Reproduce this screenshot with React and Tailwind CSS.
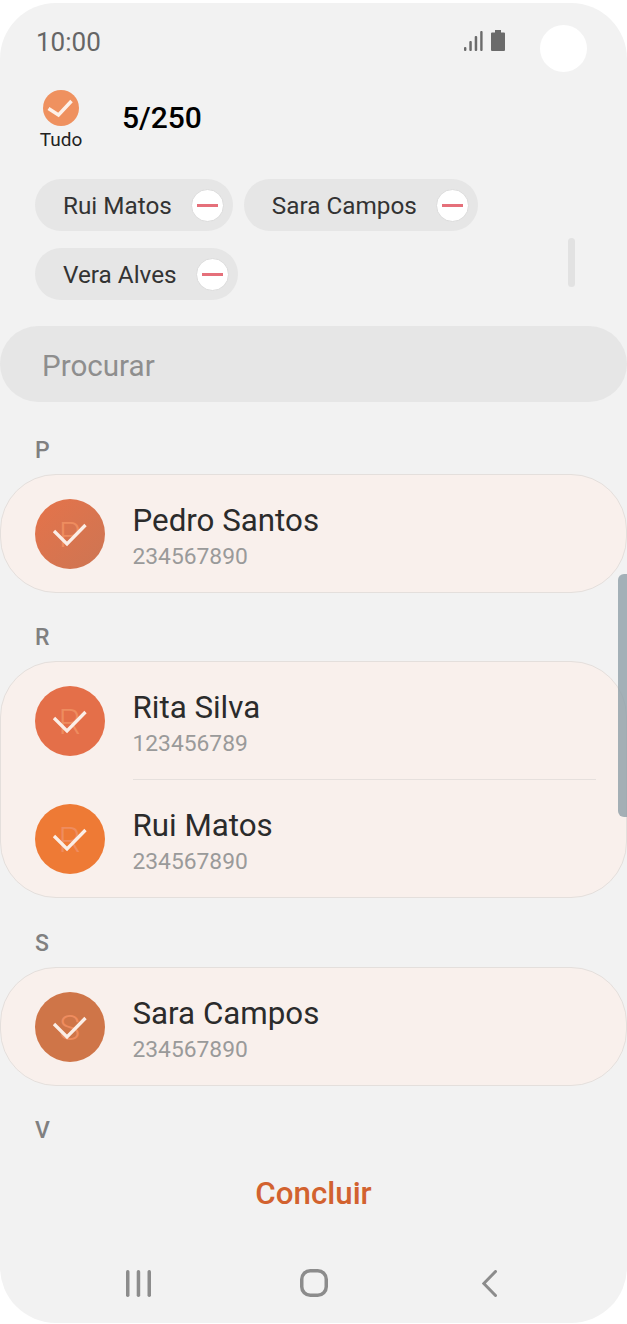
const Chip = ({ name }) => (
  <div className="flex items-center h-[52px] rounded-full bg-[#e6e6e6] pl-[28px] pr-[9px]">
    <span className="text-[24.3px] leading-none pt-[2px] text-[#333]">{name}</span>
    <span className="ml-[19px] flex items-center justify-center w-[33px] h-[33px] rounded-full bg-white border border-[#dcdcdc]">
      <span className="block w-[21px] h-[3px] bg-[#e5707a]" />
    </span>
  </div>
);

const Contact = ({ letter, name, phone, color }) => (
  <div className="flex items-center h-[117px] pl-[33.5px]">
    <div className={`relative flex items-center justify-center w-[70px] h-[70px] pt-[4px] rounded-full ${color}`}>
      <span className="text-[35px] leading-none font-light text-[#ee8c5f]">{letter}</span>
      <svg viewBox="0 0 70 70" className="absolute inset-0 w-[70px] h-[70px]" fill="none" stroke="#fbeee7" strokeWidth="3.300">
        <path d="M19 32 L32 45 L50.500 26" />
      </svg>
    </div>
    <div className="ml-[28px] flex flex-col pt-[5px]">
      <span className="text-[31.3px] leading-[36px] text-[#2b2b2b]">{name}</span>
      <span className="text-[22.8px] leading-[26px] mt-[5px] text-[#9a9a9a]">{phone}</span>
    </div>
  </div>
);

const Section = ({ letter }) => (
  <div className="pl-[35px] h-[24px] text-[23px] leading-[24px] font-medium text-[#808080]">{letter}</div>
);

export default function App() {
  return (
    <div className="w-[627px] h-[1324px] bg-white pt-[3px]" style={{ fontFamily: 'Roboto, sans-serif' }}>
      <div className="relative w-[627px] h-[1320px] rounded-[56px] bg-[#f2f2f2] overflow-hidden">
        {/* status bar */}
        <div className="flex items-center h-[78px] pl-[36px]">
          <span className="text-[26px] leading-none text-[#666]">10:00</span>
          <div className="flex items-end gap-[8px] ml-[363px] -mt-[4px]">
            <svg viewBox="0 0 19 20" className="w-[19px] h-[20px]" fill="#6b6b6b">
              <rect x="0" y="16" width="2.400" height="4" rx="1" />
              <rect x="5.300" y="10" width="2.500" height="10" rx="1" />
              <rect x="10.700" y="5" width="2.500" height="15" rx="1" />
              <rect x="16.200" y="0" width="2.400" height="20" rx="1" />
            </svg>
            <svg viewBox="0 0 14 21" className="w-[14px] h-[21px]" fill="#6b6b6b">
              <path d="M4 0 H10 V2.500 H13 A1 1 0 0 1 14 3.500 V20 A1 1 0 0 1 13 21 H1 A1 1 0 0 1 0 20 V3.500 A1 1 0 0 1 1 2.500 H4 Z" />
            </svg>
          </div>
        </div>
        <div className="absolute left-[540px] top-[22px] w-[47px] h-[47px] rounded-full bg-white" />

        {/* select all */}
        <div className="flex items-start pl-[40px] mt-[9px]">
          <div className="flex flex-col items-center w-[42px]">
            <svg viewBox="0 0 36 36" className="w-[36px] h-[36px]">
              <circle cx="18" cy="18" r="18" fill="#ef915f" />
              <path d="M5.500 18.500 L15.500 25 L28.500 11" fill="none" stroke="#fdf1e9" strokeWidth="3.500" />
            </svg>
            <span className="text-[19px] leading-[22px] mt-[3px] text-[#222]">Tudo</span>
          </div>
          <span className="ml-[40px] mt-[12px] text-[30px] leading-[32px] font-medium text-black">5/250</span>
        </div>

        {/* selected chips */}
        <div className="flex flex-wrap gap-x-[11px] gap-y-[17px] w-[520px] ml-[35px] mt-[28px]">
          <Chip name="Rui Matos" />
          <Chip name="Sara Campos" />
          <Chip name="Vera Alves" />
        </div>
        <div className="absolute left-[568px] top-[235px] w-[7px] h-[49px] rounded-full bg-[#e2e2e2]" />

        {/* search */}
        <div className="flex items-center h-[76px] mt-[26px] pl-[42px] pt-[5px] rounded-full bg-[#e6e6e6]">
          <span className="text-[29.6px] leading-none text-[#8e8e8e]">Procurar</span>
        </div>

        {/* contacts */}
        <div className="mt-[37px]">
          <Section letter="P" />
          <div className="mt-[11px] rounded-[56px] border border-[#e4dfdc] bg-[#f9f0ec]">
            <Contact letter="P" name="Pedro Santos" phone="234567890" color="bg-gradient-to-br from-[#e5734a] to-[#cd7553]" />
          </div>
          <div className="mt-[33px]"><Section letter="R" /></div>
          <div className="mt-[11px] rounded-[56px] border border-[#e4dfdc] bg-[#f9f0ec]">
            <Contact letter="R" name="Rita Silva" phone="123456789" color="bg-[#e46f49]" />
            <div className="h-px ml-[132px] mr-[30px] bg-[#e6e0dd]" />
            <Contact letter="R" name="Rui Matos" phone="234567890" color="bg-[#ee7a35]" />
          </div>
          <div className="mt-[34px]"><Section letter="S" /></div>
          <div className="mt-[11px] rounded-[56px] border border-[#e4dfdc] bg-[#f9f0ec]">
            <Contact letter="S" name="Sara Campos" phone="234567890" color="bg-[#cf7548]" />
          </div>
          <div className="mt-[33px]"><Section letter="V" /></div>
        </div>

        {/* done */}
        <div className="flex justify-center mt-[31px]">
          <span className="text-[31.3px] leading-[40px] font-medium text-[#d2622f]">Concluir</span>
        </div>

        {/* nav bar */}
        <div className="flex items-center mt-[55px] pl-[126px]">
          <svg viewBox="0 0 25 27" className="w-[25px] h-[27px]" fill="#8c8c8c">
            <rect x="0" y="0" width="3.500" height="27" rx="1.700" />
            <rect x="10.700" y="0" width="3.500" height="27" rx="1.700" />
            <rect x="21.500" y="0" width="3.500" height="27" rx="1.700" />
          </svg>
          <svg viewBox="0 0 28 28" className="ml-[149px] w-[28px] h-[28px]" fill="none" stroke="#8c8c8c" strokeWidth="3.500">
            <rect x="1.750" y="1.750" width="24.500" height="24.500" rx="8.500" />
          </svg>
          <svg viewBox="0 0 15 27" className="ml-[154px] w-[15px] h-[27px]" fill="none" stroke="#8c8c8c" strokeWidth="3" strokeLinecap="round">
            <path d="M13.500 1.500 L1.800 13.500 L13.500 25.500" />
          </svg>
        </div>

        {/* page scrollbar */}
        <div className="absolute right-0 top-[571px] w-[9px] h-[243px] rounded-l-[6px] bg-[#8e9fa8]/80" />
      </div>
    </div>
  );
}
